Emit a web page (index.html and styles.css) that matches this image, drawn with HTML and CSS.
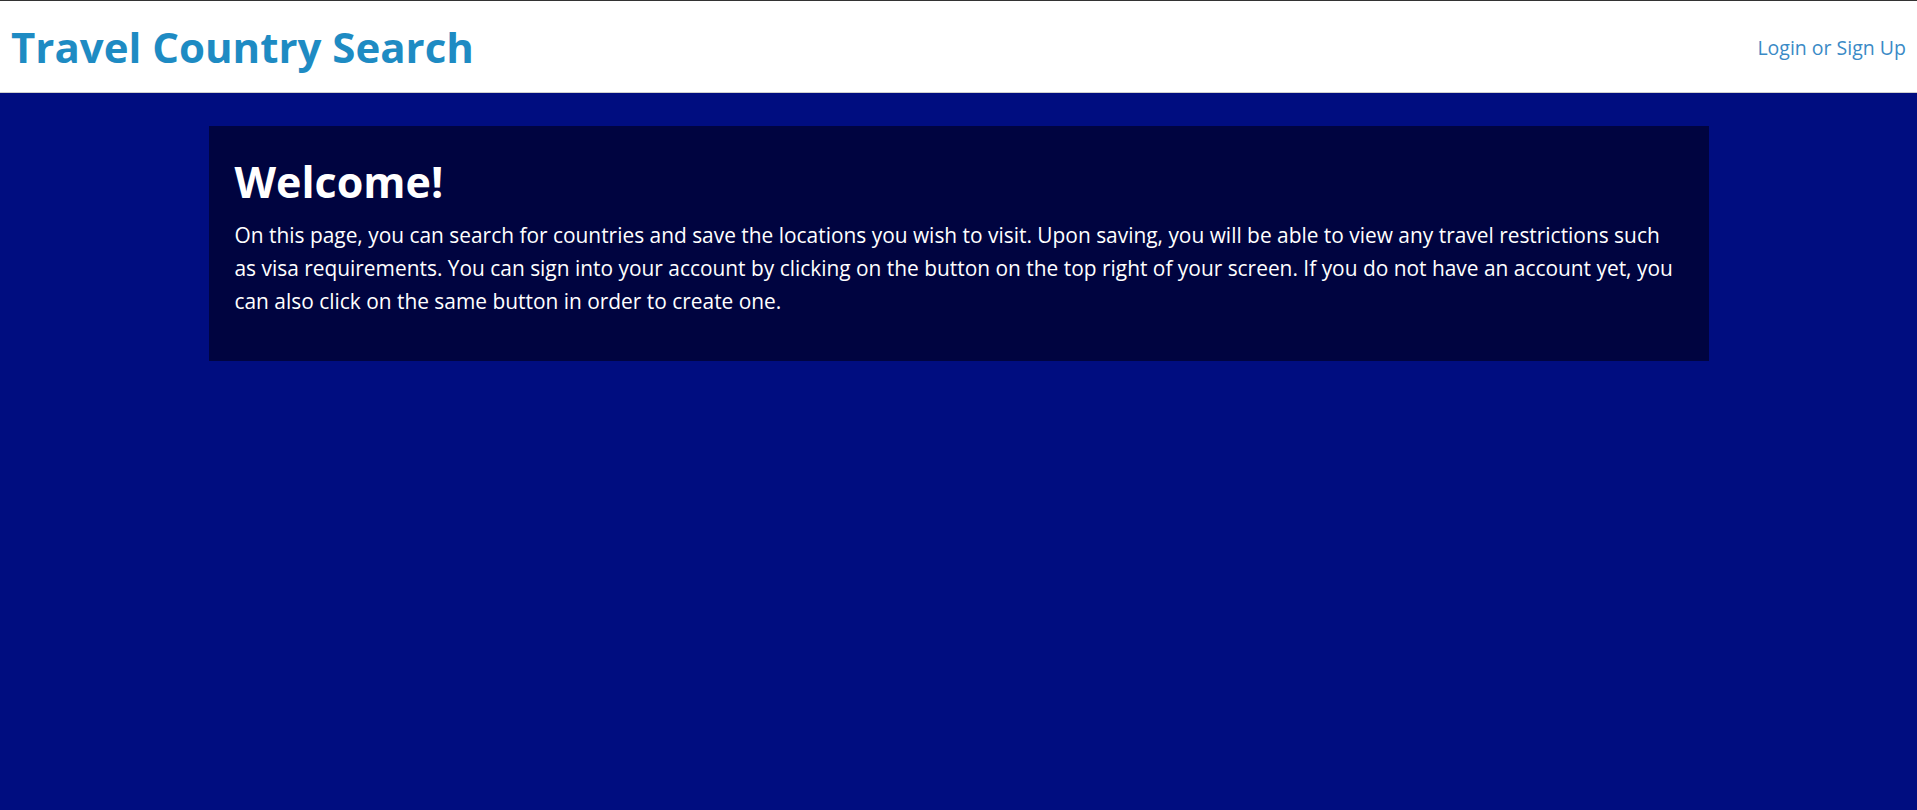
FILE: index.html
```html
<!DOCTYPE html>
<html lang="en">
<head>
<meta charset="utf-8">
<title>Travel Country Search</title>
<link rel="stylesheet" href="styles.css">
</head>
<body>
<header class="topbar">
  <h1 class="brand">Travel Country Search</h1>
  <a class="login" href="#">Login or Sign Up</a>
</header>
<main class="page">
  <section class="welcome">
    <h2 class="welcome-title">Welcome!</h2>
    <p class="welcome-text">On this page, you can search for countries and save the locations you wish to visit. Upon saving, you will be able to view any travel restrictions such as visa requirements. You can sign into your account by clicking on the button on the top right of your screen. If you do not have an account yet, you can also click on the same button in order to create one.</p>
  </section>
</main>
</body>
</html>
```
FILE: styles.css
```css
html, body {
  margin: 0;
  padding: 0;
  height: 100%;
}
body {
  background: #000d80;
  font-family: "Open Sans", "Noto Sans", sans-serif;
  border-top: 1px solid #333;
  box-sizing: border-box;
}
.topbar {
  background: #fff;
  height: 91px;
  border-bottom: 1px solid #cfcfcf;
  display: flex;
  align-items: center;
  justify-content: space-between;
  padding: 0 11px 0 11px;
}
.brand {
  margin: 0;
  font-size: 42px;
  font-weight: 700;
  color: #1e8bc3;
}
.login {
  color: #3a8ac6;
  font-size: 19.5px;
  text-decoration: none;
  padding-top: 2px;
}
.page {
  padding-top: 33px;
}
.welcome {
  width: 1500px;
  margin: 0 auto;
  background: #000440;
  box-sizing: border-box;
  padding: 30px 26px 30px;
  height: 235px;
  color: #fff;
}
.welcome-title {
  margin: 0 0 11px;
  font-size: 43px;
  font-weight: 700;
  line-height: 1.2;
}
.welcome-text {
  margin: 0;
  font-size: 20.9px;
  line-height: 33px;
}
```
